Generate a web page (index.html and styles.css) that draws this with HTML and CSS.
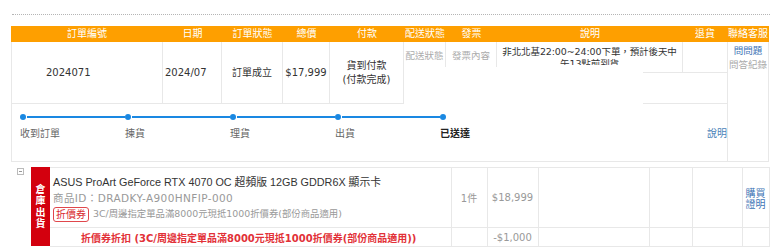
FILE: index.html
```html
<!DOCTYPE html>
<html lang="zh-Hant">
<head>
    <meta charset="UTF-8">
    <meta name="viewport" content="width=device-width, initial-scale=1.0">
    <title>訂單查詢</title>
    <link rel="stylesheet" href="styles.css">
</head>
<body>

<div class="dotline"></div>

<div class="order">
    <div class="order-head">
        <div class="hcol w-no">訂單編號</div>
        <div class="hcol w-date">日期</div>
        <div class="hcol w-status">訂單狀態</div>
        <div class="hcol w-total">總價</div>
        <div class="hcol w-pay">付款</div>
        <div class="hcol w-ship">配送狀態</div>
        <div class="hcol w-inv">發票</div>
        <div class="hcol w-desc">說明</div>
        <div class="hcol w-ret">退貨</div>
        <div class="hcol w-svc">聯絡客服</div>
    </div>

    <div class="order-body">
        <div class="order-main">
            <div class="order-row">
                <div class="cell w-no c-no">2024071</div>
                <div class="cell w-date c-date">2024/07</div>
                <div class="cell w-status c-mid">訂單成立</div>
                <div class="cell w-total c-mid">$17,999</div>
                <div class="cell w-pay c-mid">貨到付款<br>(付款完成)</div>
                <div class="cell w-ship c-small">配送狀態</div>
                <div class="cell w-inv c-small">發票內容</div>
                <div class="cell w-desc c-desc">
                    <div class="desc-text">非北北基22:00~24:00下單，預計後天中午13點前到貨</div>
                </div>
                <div class="cell w-ret c-ret"></div>
            </div>

            <div class="steps">
                <div class="step">
                    <div class="step-bar"><span class="dot"></span><span class="bar"></span></div>
                    <div class="step-name">收到訂單</div>
                </div>
                <div class="step">
                    <div class="step-bar"><span class="dot"></span><span class="bar"></span></div>
                    <div class="step-name">揀貨</div>
                </div>
                <div class="step">
                    <div class="step-bar"><span class="dot"></span><span class="bar"></span></div>
                    <div class="step-name">理貨</div>
                </div>
                <div class="step">
                    <div class="step-bar"><span class="dot"></span><span class="bar"></span></div>
                    <div class="step-name">出貨</div>
                </div>
                <div class="step">
                    <div class="step-bar"><span class="dot"></span></div>
                    <div class="step-name done">已送達</div>
                </div>
                <a class="step-help" href="#">說明</a>
            </div>
        </div>

        <div class="service">
            <a href="#">問問題</a>
            <span>問答紀錄</span>
        </div>
    </div>
</div>

<div class="items">
    <span class="toggle"></span>
    <div class="store-tag">倉<br>庫<br>出<br>貨</div>
    <table class="item-table">
        <tr class="item-row">
            <td class="i-name">
                <div class="prod-title">ASUS ProArt GeForce RTX 4070 OC 超頻版 12GB GDDR6X 顯示卡</div>
                <div class="prod-id">商品ID：DRADKY-A900HNFIP-000</div>
                <div class="prod-coupon"><span class="coupon-tag">折價券</span>3C/周邊指定單品滿8000元現抵1000折價券(部份商品適用)</div>
            </td>
            <td class="i-qty">1件</td>
            <td class="i-price">$18,999</td>
            <td class="i-e1"></td>
            <td class="i-e2"></td>
            <td class="i-e3"></td>
            <td class="i-link"><a href="#">購買<br>證明</a></td>
        </tr>
        <tr class="discount-row">
            <td class="i-discount">折價券折扣 (3C/周邊指定單品滿8000元現抵1000折價券(部份商品適用))</td>
            <td></td>
            <td class="i-price">-$1,000</td>
            <td></td>
            <td></td>
            <td></td>
            <td></td>
        </tr>
    </table>
</div>

</body>
</html>
```

FILE: styles.css
```css
* {
    box-sizing: border-box;
}

body {
    margin: 0;
    padding-top: 14px;
    font-family: "DejaVu Sans", "Noto Sans CJK TC", sans-serif;
    font-size: 10px;
    color: #333;
    background-color: #fff;
}

a {
    text-decoration: none;
    color: #3d74b5;
}

.dotline {
    margin-left: 12px;
    width: 758px;
    border-top: 1px dotted #b5b5b5;
}

/* 訂單表頭 */
.order {
    margin: 11px 0 0 11px;
    width: 758px;
}

.order-head {
    display: flex;
    height: 16px;
    background-color: #fe9f00;
    color: #fff;
    line-height: 16px;
}

.hcol {
    text-align: center;
}

.w-no { width: 152px; }
.w-date { width: 59px; }
.w-status { width: 61px; }
.w-total { width: 47px; }
.w-pay { width: 74px; }
.w-ship { width: 42px; }
.w-inv { width: 51px; }
.w-desc { width: 186px; }
.w-ret { width: 44px; }
.w-svc { width: 42px; }

.order-body {
    display: flex;
    border-bottom: 1px solid #e8e8e8;
}

.order-main {
    width: 716px;
    border-left: 1px solid #e8e8e8;
}

.order-row {
    display: flex;
    align-items: flex-start;
    height: 62px;
    background:
        linear-gradient(#e8e8e8, #e8e8e8) no-repeat 631px 30px / 84px 1px,
        linear-gradient(#e8e8e8, #e8e8e8) no-repeat 631px 61px / 84px 1px;
}

.cell {
    border-right: 1px solid #e8e8e8;
}

.order-row .w-no { width: 151px; }

.c-no,
.c-date,
.c-mid {
    display: flex;
    align-items: center;
    height: 62px;
    border-bottom: 1px solid #e8e8e8;
    font-size: 10px;
    color: #333;
}

.c-no {
    padding-left: 34px;
}

.c-date {
    padding-left: 2px;
}

.c-mid {
    justify-content: center;
    text-align: center;
    line-height: 14px;
}

.c-small {
    height: 25px;
    padding-top: 7px;
    line-height: 14px;
    text-align: center;
    font-size: 9.5px;
    color: #aaa;
    white-space: nowrap;
}

.c-desc {
    height: 31px;
    padding: 4px 4px 0;
}

.desc-text {
    height: 19px;
    overflow: hidden;
    font-size: 9.5px;
    line-height: 12px;
    letter-spacing: -0.1px;
    text-align: center;
}

.c-ret {
    height: 31px;
    border-right: none;
}

/* 配送進度 */
.steps {
    display: flex;
    align-items: flex-start;
    height: 57px;
    padding: 10px 0 0 8px;
}

.step {
    width: 105px;
}

.step-bar {
    display: flex;
    align-items: center;
    height: 6px;
}

.dot {
    width: 6px;
    height: 6px;
    border-radius: 50%;
    background-color: #1a88e2;
}

.bar {
    flex: 1;
    height: 2px;
    margin-left: 1px;
    background-color: #1a88e2;
}

.step-name {
    margin-top: 7px;
    line-height: 14px;
    color: #666;
}

.step-name.done {
    font-weight: bold;
    color: #222;
}

.step-help {
    margin: 13px 0 0 auto;
    line-height: 14px;
    color: #4a82b8;
}

.service {
    width: 42px;
    border-left: 1px solid #e8e8e8;
    border-right: 1px solid #e8e8e8;
    padding-top: 2px;
    line-height: 14px;
    font-size: 9.5px;
    text-align: center;
}

.service a,
.service span {
    display: block;
}

.service span {
    color: #aaa;
}

/* 商品明細 */
.items {
    display: flex;
    align-items: flex-start;
    margin: 5px 0 0 11px;
}

.toggle {
    width: 7px;
    height: 7px;
    margin: 1px 7px 0 6px;
    border: 1px solid #bbb;
    background: linear-gradient(#999, #999) no-repeat center / 3px 1px;
}

.store-tag {
    display: flex;
    align-items: center;
    justify-content: center;
    width: 19px;
    height: 79px;
    background-color: #d3000e;
    color: #fff;
    font-weight: bold;
    font-size: 10px;
    line-height: 11.5px;
    text-align: center;
}

.item-table {
    width: 719px;
    border-collapse: collapse;
    table-layout: fixed;
}

.item-table td {
    border: 1px solid #e8e8e8;
    padding: 0;
    vertical-align: middle;
    text-align: center;
    color: #999;
}

.item-table td:first-child {
    border-left: none;
}

.item-row td {
    height: 60px;
}

.discount-row td {
    height: 19px;
}

.item-table .i-name {
    width: 401px;
    vertical-align: top;
    text-align: left;
    padding: 6px 0 0 3px;
    line-height: 16px;
}

.i-qty { width: 36px; }
.i-price { width: 51px; }
.i-e1 { width: 111px; }
.i-e2 { width: 43px; }
.i-e3 { width: 50px; }
.i-link { width: 27px; }

.i-link a {
    display: inline-block;
    margin-top: 3px;
    line-height: 11px;
    color: #3d74b5;
}

.prod-title {
    font-family: "Liberation Sans", "Noto Sans CJK TC", sans-serif;
    font-size: 10.8px;
    color: #333;
}

.prod-id {
    font-size: 10.5px;
    letter-spacing: 0.4px;
    color: #999;
}

.prod-coupon {
    display: flex;
    align-items: center;
    font-size: 9.4px;
    color: #999;
}

.coupon-tag {
    height: 15px;
    margin-right: 4px;
    padding: 0 2px;
    border: 1px solid #e0474c;
    border-radius: 3px;
    font-size: 10px;
    line-height: 13px;
    color: #d92a30;
}

.item-table .i-discount {
    text-align: left;
    padding-left: 31px;
    font-weight: bold;
    color: #e23138;
}
```
